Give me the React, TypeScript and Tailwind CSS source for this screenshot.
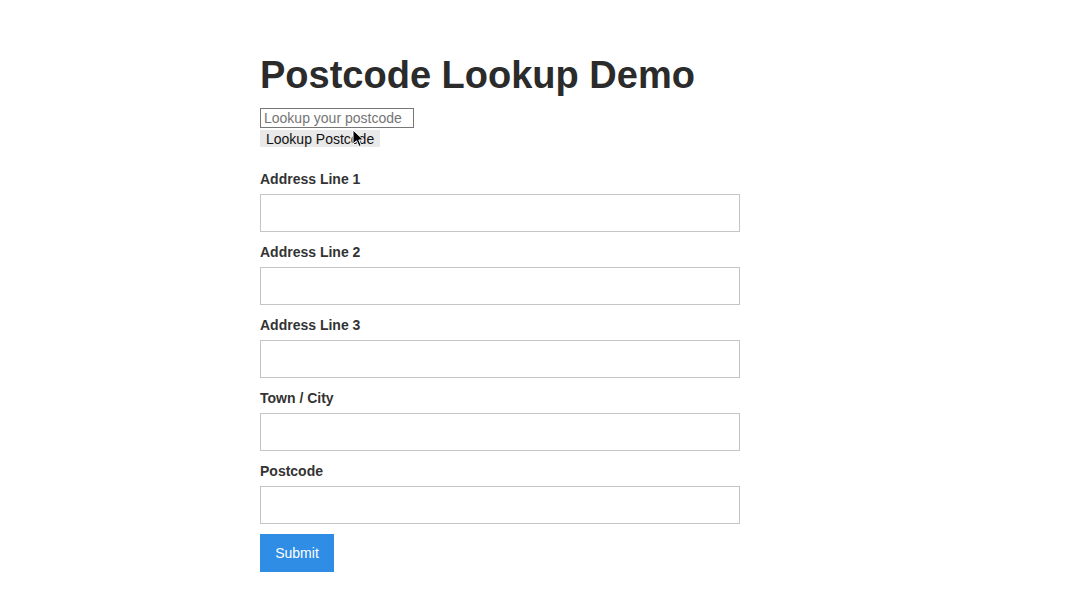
import React from "react";

const fields = ["Address Line 1", "Address Line 2", "Address Line 3", "Town / City", "Postcode"];

const Cursor = () => (
  <svg
    className="absolute left-[352px] top-[129px]"
    width="14"
    height="20"
    viewBox="0 0 14 20"
  >
    <path
      d="M1 1 L1 15 L4.5 11.8 L7 17.5 L9.2 16.5 L6.8 11 L11.5 11 Z"
      fill="#000"
      stroke="#fff"
      strokeWidth="1"
      strokeLinejoin="round"
    />
  </svg>
);

export default function App() {
  return (
    <div className="relative min-h-[608px] w-full bg-white font-['Liberation_Sans',Arial,sans-serif]">
      <div className="ml-[260px] w-[480px] pt-[53px]">
        <h1 className="text-[38px] font-bold leading-[45px] text-[#2b2b2b]">Postcode Lookup Demo</h1>

        <div className="mt-[10px] flex flex-col items-start">
          <input
            type="text"
            placeholder="Lookup your postcode"
            className="h-[20px] w-[154px] border border-[#767676] px-[3px] text-[14px] leading-[16px] text-[#222] placeholder:text-[#757575] outline-none"
          />
          <button className="mt-[2px] h-[17px] bg-[#e9e9e9] px-[6px] text-[14px] leading-[18px] text-[#111]">
            Lookup Postcode
          </button>
        </div>

        <form className="mt-[24px]">
          {fields.map((label, i) => (
            <div key={label} className={i > 0 ? "mt-[12px]" : ""}>
              <label className="block text-[14px] font-bold leading-[17px] text-[#333]">{label}</label>
              <input
                type="text"
                className="mt-[6px] block h-[38px] w-[480px] border border-[#c4c4c4] px-2 text-[14px] outline-none"
              />
            </div>
          ))}
          <button
            type="button"
            className="mt-[10px] h-[38px] w-[74px] bg-[#2f8de6] text-[14px] text-white"
          >
            Submit
          </button>
        </form>
      </div>
      <Cursor />
    </div>
  );
}
